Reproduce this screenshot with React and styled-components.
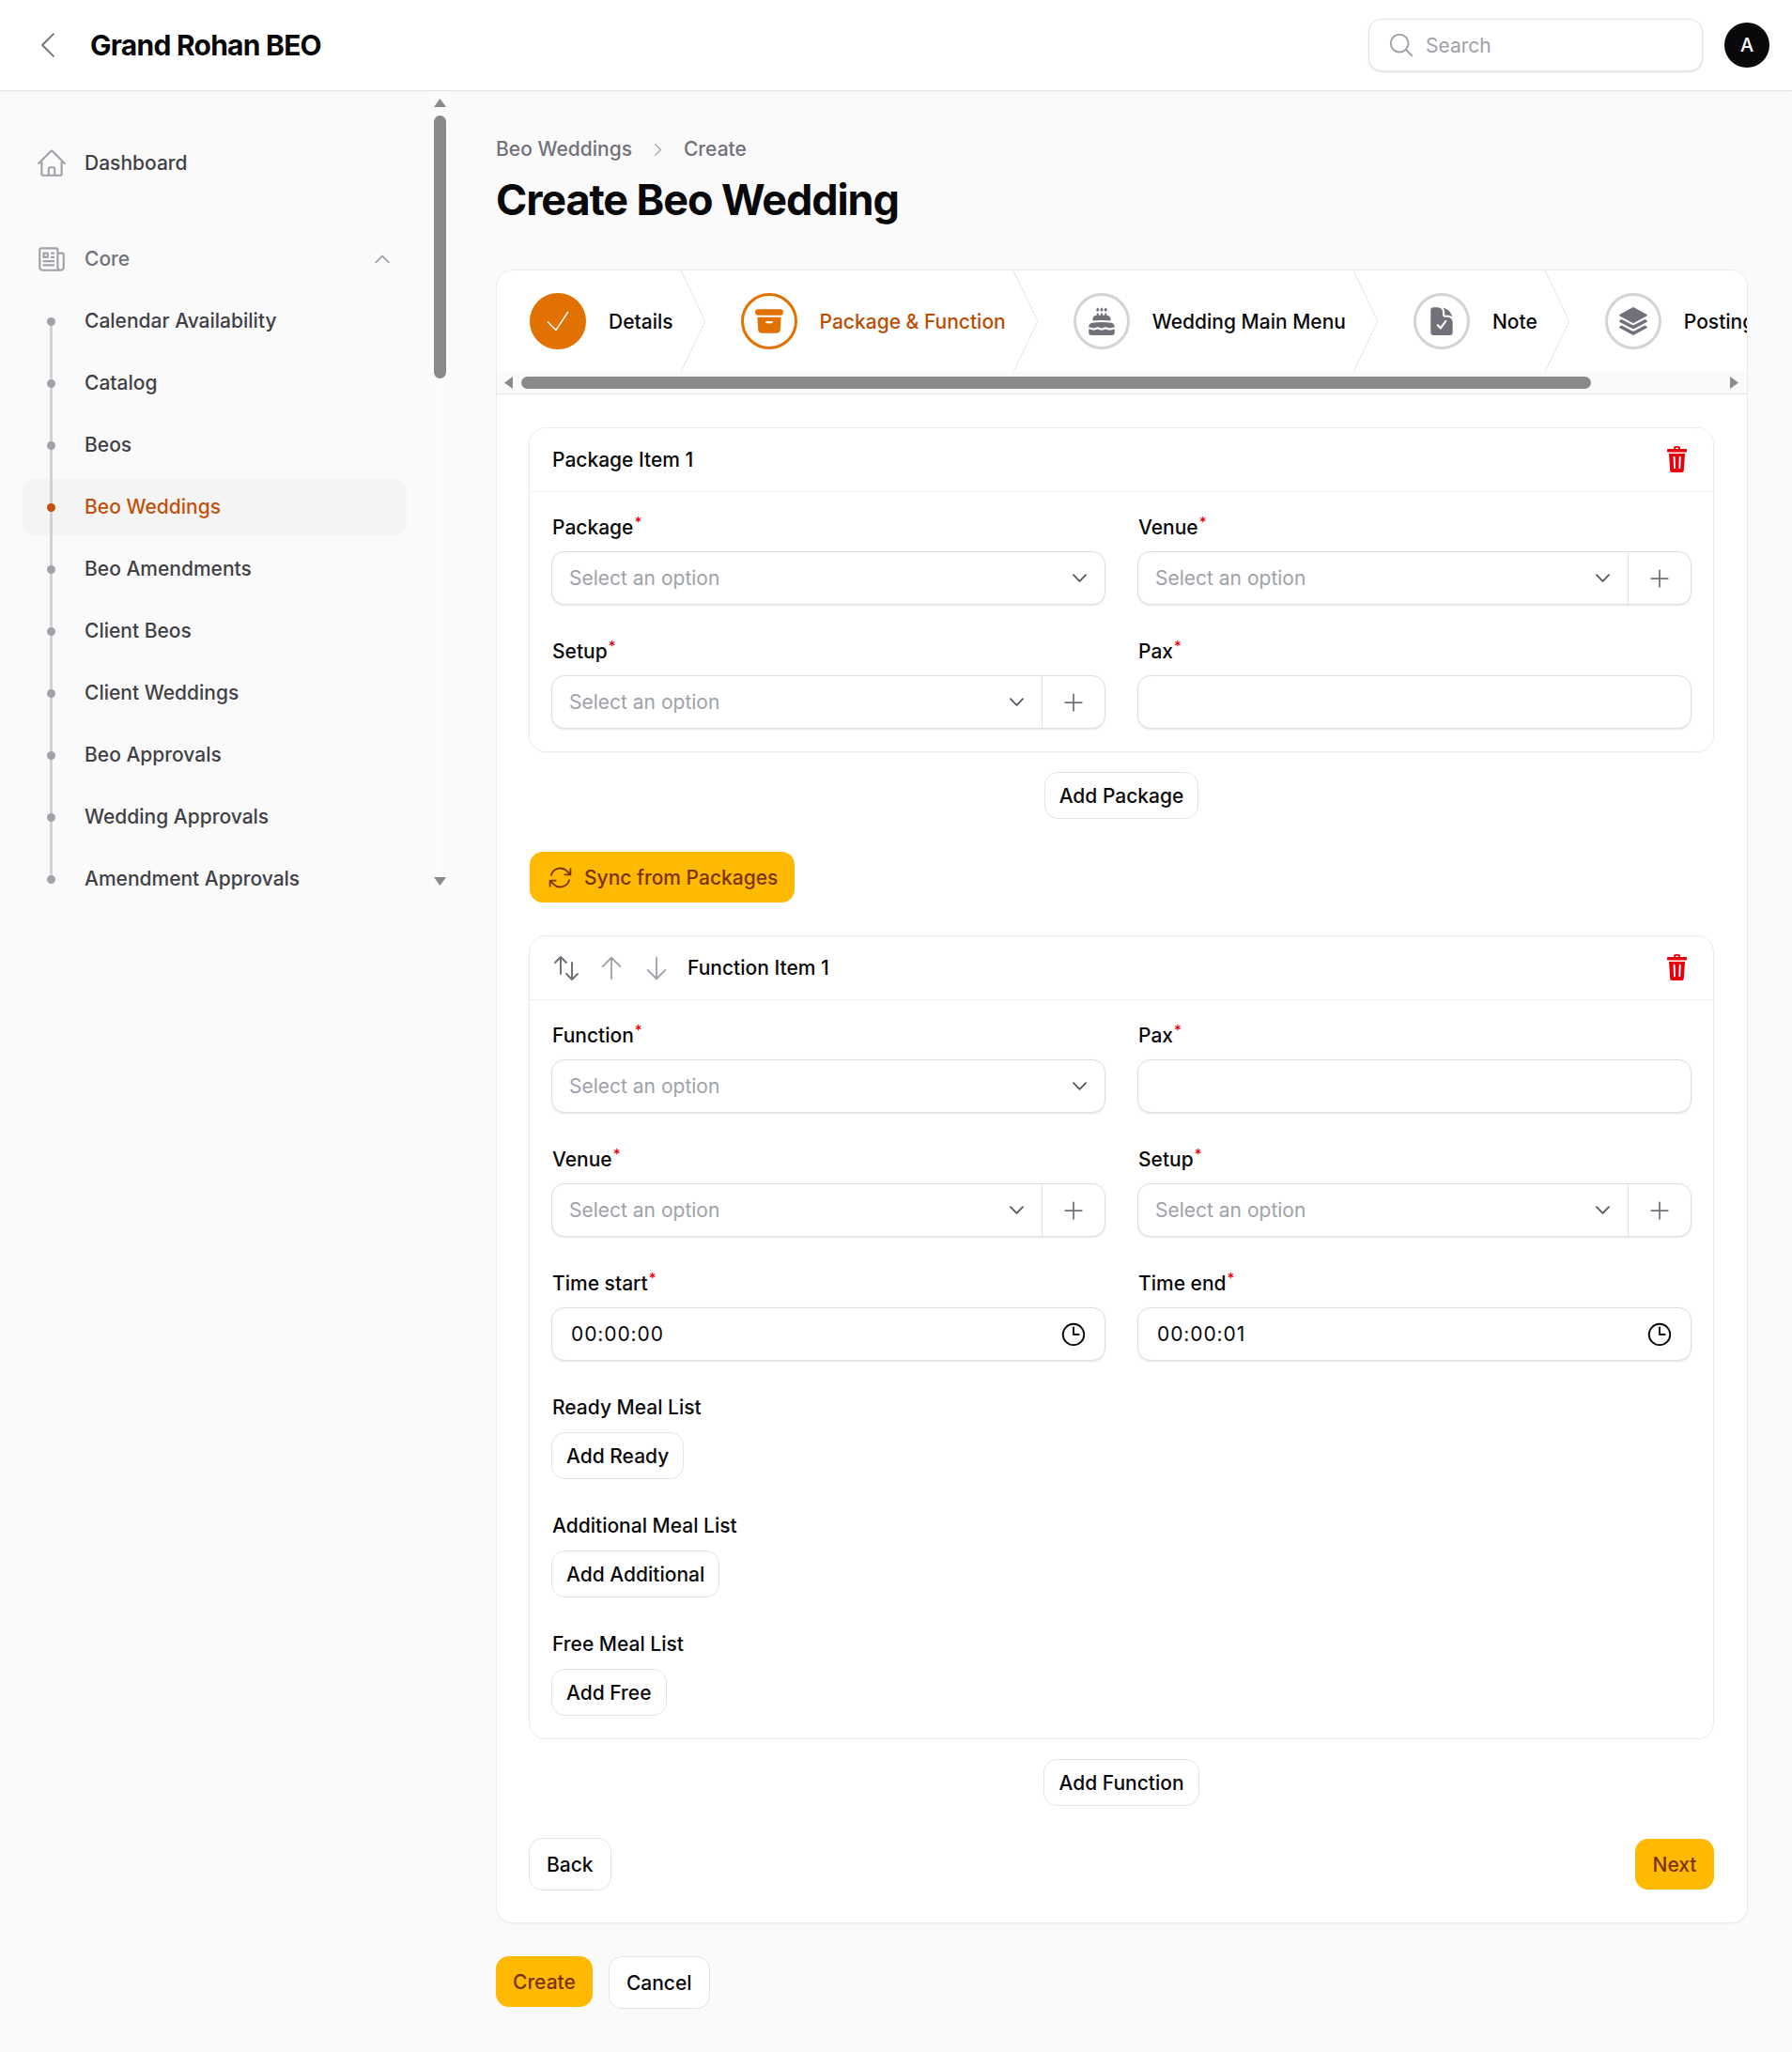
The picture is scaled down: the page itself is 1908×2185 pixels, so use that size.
import React from "react";
import styled, { createGlobalStyle } from "styled-components";
import {
  HiOutlineChevronLeft, HiOutlineChevronRight, HiOutlineChevronUp, HiOutlineChevronDown,
  HiOutlineHome, HiOutlineNewspaper, HiOutlineMagnifyingGlass, HiOutlineCheck, HiArchiveBox, HiCake,
  HiDocumentCheck, HiSquare3Stack3D, HiOutlinePlus, HiOutlineArrowPath, HiOutlineArrowsUpDown,
  HiOutlineArrowUp, HiOutlineArrowDown, HiOutlineClock,
} from "react-icons/hi2";

const Global = createGlobalStyle`
  html, body { margin: 0; padding: 0; background: #fafafa; }
  body { font-family: Inter, "Liberation Sans", sans-serif; color: #09090b; }
  * { box-sizing: border-box; }
`;

const Page = styled.div`width: 1908px; min-height: 2185px; display: flex; flex-direction: column;`;

const Topbar = styled.header`
  height: 97px; background: #fff; border-bottom: 1px solid #e4e4e7;
  box-shadow: 0 1px 2px rgba(0,0,0,.04);
  display: flex; align-items: center; padding: 0 24px 0 32px;
`;
const BackIcon = styled(HiOutlineChevronLeft)`font-size: 38px; color: #71717a; stroke-width: 1.2;`;
const Brand = styled.div`margin-left: 26px; font-size: 30px; font-weight: 700; letter-spacing: -0.75px; line-height: 40px;`;
const SearchBox = styled.div`
  margin-left: auto; width: 356px; height: 56px; border-radius: 14px; background: #fff;
  border: 1px solid #e4e4e7; box-shadow: 0 1px 2px rgba(0,0,0,.12);
  display: flex; align-items: center; gap: 11px; padding: 0 19px; font-size: 21px; color: #a1a1aa;
`;
const Avatar = styled.div`
  margin-left: 23px; width: 48px; height: 48px; border-radius: 50%; background: #09090b; color: #fff;
  display: flex; align-items: center; justify-content: center; font-size: 20px; font-weight: 500;
`;

const Body = styled.div`display: flex; flex: 1; align-items: flex-start;`;
const Sidebar = styled.aside`width: 480px; flex: none; display: flex; align-items: flex-start;`;
const Nav = styled.nav`width: 457px; flex: none; padding: 46.500px 24px 0; display: flex; flex-direction: column;`;
const NavRow = styled.div`
  height: 60px; width: 409px; border-radius: 14px; display: flex; align-items: center; padding: 0 15px 0 14px;
  gap: 18px; font-size: 21px; font-weight: 450; color: ${p => p.$muted ? "#71717a" : "#3f3f46"};
  margin-bottom: ${p => p.$mb || 0}px;
  svg { color: #a1a1aa; flex: none; }
`;
const NavLabel = styled.span`flex: 1;`;
const SubRow = styled.div`
  position: relative; height: 60px; width: 409px; border-radius: 14px; margin-bottom: 6px;
  display: flex; align-items: center; padding-left: 66px; font-size: 21px; font-weight: 450;
  background: ${p => p.$active ? "#f4f4f5" : "transparent"};
  color: ${p => p.$active ? "#c2500a" : "#3f3f46"};
  &::before {
    content: ""; position: absolute; left: 29px; width: 3px; background: #d0d0d6;
    top: ${p => p.$first ? "50%" : "-6px"}; bottom: ${p => p.$last ? "50%" : "0"};
  }
  &::after {
    content: ""; position: absolute; left: 26px; top: 26px; width: 9px; height: 9px; border-radius: 50%;
    background: ${p => p.$active ? "#c2500a" : "#a1a1aa"};
  }
`;
const ScrollTrack = styled.div`
  width: 22px; height: 846px; flex: none; background: #fbfbfb; display: flex; flex-direction: column;
  align-items: center; padding-top: 8px;
`;
const Thumb = styled.div`width: 13px; height: 280px; border-radius: 7px; background: #8a8a8a; margin-top: 9px;`;
const TrackFill = styled.div`flex: 1;`;
const Arrow = styled.svg`display: block; flex: none; fill: #8a8a8a;`;

const Main = styled.main`flex: 1; min-width: 0; padding: 48px 47px 46px 48px;`;
const Crumbs = styled.div`display: flex; align-items: center; gap: 18px; font-size: 21px; line-height: 28px; color: #71717a; font-weight: 450; svg { color: #a1a1aa; font-size: 19px; }`;
const Title = styled.h1`margin: 12px 0 46px; font-size: 45px; line-height: 56px; font-weight: 700; letter-spacing: -1.12px;`;

const Card = styled.section`
  background: #fff; border: 1px solid #ececee; border-radius: 18px; overflow: hidden;
  box-shadow: 0 1px 2px rgba(0,0,0,.04);
`;
const Steps = styled.div`display: flex; height: 108px; overflow: hidden;`;
const Step = styled.div`
  position: relative; flex: none; height: 108px; display: flex; align-items: center; gap: 24px;
  padding: 0 8px 0 ${p => p.$first ? 35 : 64}px; font-size: 21px; font-weight: 450; white-space: nowrap;
  color: ${p => p.$current ? "#bb4d00" : "#09090b"};
`;
const StepCircle = styled.div`
  width: 60px; height: 60px; flex: none; border-radius: 50%; display: flex; align-items: center; justify-content: center;
  background: ${p => p.$done ? "#e17100" : "#fff"};
  border: 3px solid ${p => p.$done || p.$current ? "#e17100" : "#d4d4d8"};
  color: ${p => p.$done ? "#fff" : p.$current ? "#e17100" : "#71717a"};
  font-size: 34px;
`;
const StepTip = styled.svg`position: absolute; right: -26px; top: 0; width: 26px; height: 108px; fill: none; stroke: #e4e4e7; z-index: 1;`;
const HScroll = styled.div`
  height: 24px; background: #fafafa; border-bottom: 1px solid #e4e4e7; display: flex; align-items: center;
  padding: 0 0 0 8px; gap: 9px;
`;
const HThumb = styled.div`width: 1139px; height: 13px; border-radius: 7px; background: #8a8a8a;`;
const HArrowEnd = styled(Arrow)`margin-left: auto; margin-right: 9px;`;

const CardBody = styled.div`padding: 35px 35px 34px 34px; display: flex; flex-direction: column;`;
const Panel = styled.div`
  border: 1px solid #ececee; border-radius: 18px; background: #fff; box-shadow: 0 1px 2px rgba(0,0,0,.02);
  margin-top: ${p => p.$mt || 0}px;
`;
const PanelHead = styled.div`
  height: 68px; border-bottom: 1px solid #f1f1f3; display: flex; align-items: center; padding: 0 24px 0 23px;
  font-size: 21px; font-weight: 450;
`;
const ItemTitle = styled.span`flex: 1; margin-left: ${p => p.$ml}px;`;
const MoveButton = styled.span`
  width: 32px; height: 32px; display: flex; align-items: center; justify-content: center; margin-right: 16px;
  color: ${p => p.$dim ? "#a1a1aa" : "#71717a"}; font-size: ${p => p.$size || 30}px;
  &:nth-of-type(3) { margin-right: 0; }
`;
const Trash = styled.svg`width: 21px; height: 28px; fill: #e7000b; margin: -2px 4px 0 0; flex: none;`;
const PanelGrid = styled.div`display: grid; grid-template-columns: 590px 590px; column-gap: 34px; row-gap: 36px; padding: 24px 23px 24px 23px;`;
const Field = styled.div`display: flex; flex-direction: column; gap: ${p => p.$wide ? 12 : 11}px; align-items: flex-start; grid-column: ${p => p.$wide ? "1 / -1" : "auto"};`;
const Label = styled.label`font-size: 21px; line-height: 28px; font-weight: 450; padding-left: 1px;`;
const Req = styled.sup`color: #e7000b; font-size: 15px; line-height: 0; margin-left: 1px;`;
const InputShell = styled.div`
  width: 100%; height: 57px; border: 1px solid #e0e0e3; border-radius: 14px; background: #fff;
  box-shadow: 0 1px 2px rgba(0,0,0,.1); display: flex; align-items: center; font-size: 21px;
`;
const SelectPart = styled.div`flex: 1; display: flex; align-items: center; justify-content: space-between; padding: 0 16px 0 18px; color: #a1a1aa;
  svg { color: #52525c; font-size: 21px; stroke-width: 2; }`;
const Suffix = styled.div`width: 67px; height: 100%; border-left: 1px solid #e4e4e7; display: flex; align-items: center; justify-content: center; color: #71717a; font-size: 28px;`;
const TimeText = styled.div`flex: 1; padding-left: 20px; letter-spacing: 0.9px; color: #09090b;`;
const ClockWrap = styled.div`width: 50px; font-size: 30px; display: flex; color: #09090b; padding-left: 2px;`;

const OutlineBtn = styled.button`
  height: ${p => p.$h || 50}px; padding: 0 ${p => p.$px || 15}px; background: #fff; border: 1.5px solid #e4e4e7; border-radius: 14px;
  font: 450 21px Inter, sans-serif; color: #09090b; flex: none; align-self: ${p => p.$center ? "center" : "flex-start"};
  margin-top: ${p => p.$mt || 0}px;
`;
const AmberBtn = styled.button`
  height: 54px; padding: 0 ${p => p.$px || 18}px; border: 0; border-radius: 14px; background: #ffb900; color: #7b3306;
  font: 450 21px Inter, sans-serif; display: flex; align-items: center; gap: 11px; align-self: ${p => p.$end ? "auto" : "flex-start"};
  margin: ${p => p.$mt || 0}px 0 0 ${p => p.$ml || 0}px; flex: none;
  svg { font-size: 29px; }
`;
const NavButtons = styled.div`display: flex; justify-content: space-between; align-items: center; margin-top: 34px;`;
const Actions = styled.div`display: flex; align-items: center; gap: 17px; margin-top: 35px;`;

const Up = () => <Arrow width="13" height="9" viewBox="0 0 13 9"><path d="M6.5 0 13 9H0z" /></Arrow>;
const Down = () => <Arrow width="13" height="9" viewBox="0 0 13 9"><path d="M0 0h13L6.5 9z" /></Arrow>;

const TrashIcon = () => (
  <Trash viewBox="0 0 21 28">
    <path fillRule="evenodd" d="M7 3V2a2 2 0 0 1 2-2h3a2 2 0 0 1 2 2v1h6a1 1 0 0 1 1 1v1.5a1 1 0 0 1-1 1H1a1 1 0 0 1-1-1V4a1 1 0 0 1 1-1zm2 0h3V1.8H9zM2 8h17l-1.2 18a2 2 0 0 1-2 2H5.2a2 2 0 0 1-2-2zm4.6 3 .5 13h1.8l-.4-13zm6.2 0-.4 13h1.8l.5-13z" />
  </Trash>
);

const Select = ({ add }) => (
  <InputShell>
    <SelectPart>Select an option<HiOutlineChevronDown /></SelectPart>
    {add && <Suffix><HiOutlinePlus /></Suffix>}
  </InputShell>
);
const Lab = ({ children, req = true }) => <Label>{children}{req && <Req>*</Req>}</Label>;
const SelectField = ({ label, add }) => <Field><Lab>{label}</Lab><Select add={add} /></Field>;
const TextField = ({ label }) => <Field><Lab>{label}</Lab><InputShell /></Field>;
const TimeField = ({ label, value }) => (
  <Field><Lab>{label}</Lab><InputShell><TimeText>{value}</TimeText><ClockWrap><HiOutlineClock /></ClockWrap></InputShell></Field>
);
const ListField = ({ label, action }) => (
  <Field $wide><Lab req={false}>{label}</Lab><OutlineBtn>{action}</OutlineBtn></Field>
);

const subItems = ["Calendar Availability", "Catalog", "Beos", "Beo Weddings", "Beo Amendments", "Client Beos", "Client Weddings", "Beo Approvals", "Wedding Approvals", "Amendment Approvals"];

const steps = [
  { label: "Details", icon: <HiOutlineCheck strokeWidth={1.1} />, done: true },
  { label: "Package & Function", icon: <HiArchiveBox />, current: true },
  { label: "Wedding Main Menu", icon: <HiCake /> },
  { label: "Note", icon: <HiDocumentCheck /> },
  { label: "Posting", icon: <HiSquare3Stack3D /> },
];

export default function App() {
  return (
    <Page>
      <Global />
      <Topbar>
        <BackIcon />
        <Brand>Grand Rohan BEO</Brand>
        <SearchBox><HiOutlineMagnifyingGlass size={30} />Search</SearchBox>
        <Avatar>A</Avatar>
      </Topbar>
      <Body>
        <Sidebar>
          <Nav>
            <NavRow $mb={42}><HiOutlineHome size={34} /><NavLabel>Dashboard</NavLabel></NavRow>
            <NavRow $mb={6} $muted><HiOutlineNewspaper size={34} /><NavLabel>Core</NavLabel><HiOutlineChevronUp size={22} strokeWidth={2} /></NavRow>
            {subItems.map((s, i) => (
              <SubRow key={s} $active={s === "Beo Weddings"} $first={i === 0} $last={i === subItems.length - 1}>{s}</SubRow>
            ))}
          </Nav>
          <ScrollTrack>
            <Up />
            <Thumb />
            <TrackFill />
            <Down />
          </ScrollTrack>
        </Sidebar>
        <Main>
          <Crumbs>Beo Weddings<HiOutlineChevronRight />Create</Crumbs>
          <Title>Create Beo Wedding</Title>
          <Card>
            <Steps>
              {steps.map((s, i) => (
                <Step key={s.label} $first={i === 0} $current={s.current}>
                  <StepCircle $done={s.done} $current={s.current}>{s.icon}</StepCircle>
                  {s.label}
                  <StepTip viewBox="0 0 26 108"><path d="M0 0 26 54 0 108" /></StepTip>
                </Step>
              ))}
            </Steps>
            <HScroll>
              <Arrow width="9" height="13" viewBox="0 0 9 13"><path d="M9 0v13L0 6.500z" /></Arrow>
              <HThumb />
              <HArrowEnd width="9" height="13" viewBox="0 0 9 13"><path d="M0 0l9 6.500L0 13z" /></HArrowEnd>
            </HScroll>
            <CardBody>
              <Panel>
                <PanelHead><ItemTitle $ml={1}>Package Item 1</ItemTitle><TrashIcon /></PanelHead>
                <PanelGrid>
                  <SelectField label="Package" />
                  <SelectField label="Venue" add />
                  <SelectField label="Setup" add />
                  <TextField label="Pax" />
                </PanelGrid>
              </Panel>
              <OutlineBtn $center $mt={21}>Add Package</OutlineBtn>
              <AmberBtn $mt={35} $ml={1}><HiOutlineArrowPath />Sync from Packages</AmberBtn>
              <Panel $mt={35}>
                <PanelHead>
                  <MoveButton $size={32}><HiOutlineArrowsUpDown /></MoveButton>
                  <MoveButton $dim><HiOutlineArrowUp /></MoveButton>
                  <MoveButton $dim><HiOutlineArrowDown /></MoveButton>
                  <ItemTitle $ml={17}>Function Item 1</ItemTitle>
                  <TrashIcon />
                </PanelHead>
                <PanelGrid>
                  <SelectField label="Function" />
                  <TextField label="Pax" />
                  <SelectField label="Venue" add />
                  <SelectField label="Setup" add />
                  <TimeField label="Time start" value="00:00:00" />
                  <TimeField label="Time end" value="00:00:01" />
                  <ListField label="Ready Meal List" action="Add Ready" />
                  <ListField label="Additional Meal List" action="Add Additional" />
                  <ListField label="Free Meal List" action="Add Free" />
                </PanelGrid>
              </Panel>
              <OutlineBtn $center $mt={21}>Add Function</OutlineBtn>
              <NavButtons>
                <OutlineBtn $h={56} $px={18}>Back</OutlineBtn>
                <AmberBtn $end $px={18.5}>Next</AmberBtn>
              </NavButtons>
            </CardBody>
          </Card>
          <Actions>
            <AmberBtn>Create</AmberBtn>
            <OutlineBtn $h={56} $px={18}>Cancel</OutlineBtn>
          </Actions>
        </Main>
      </Body>
    </Page>
  );
}
